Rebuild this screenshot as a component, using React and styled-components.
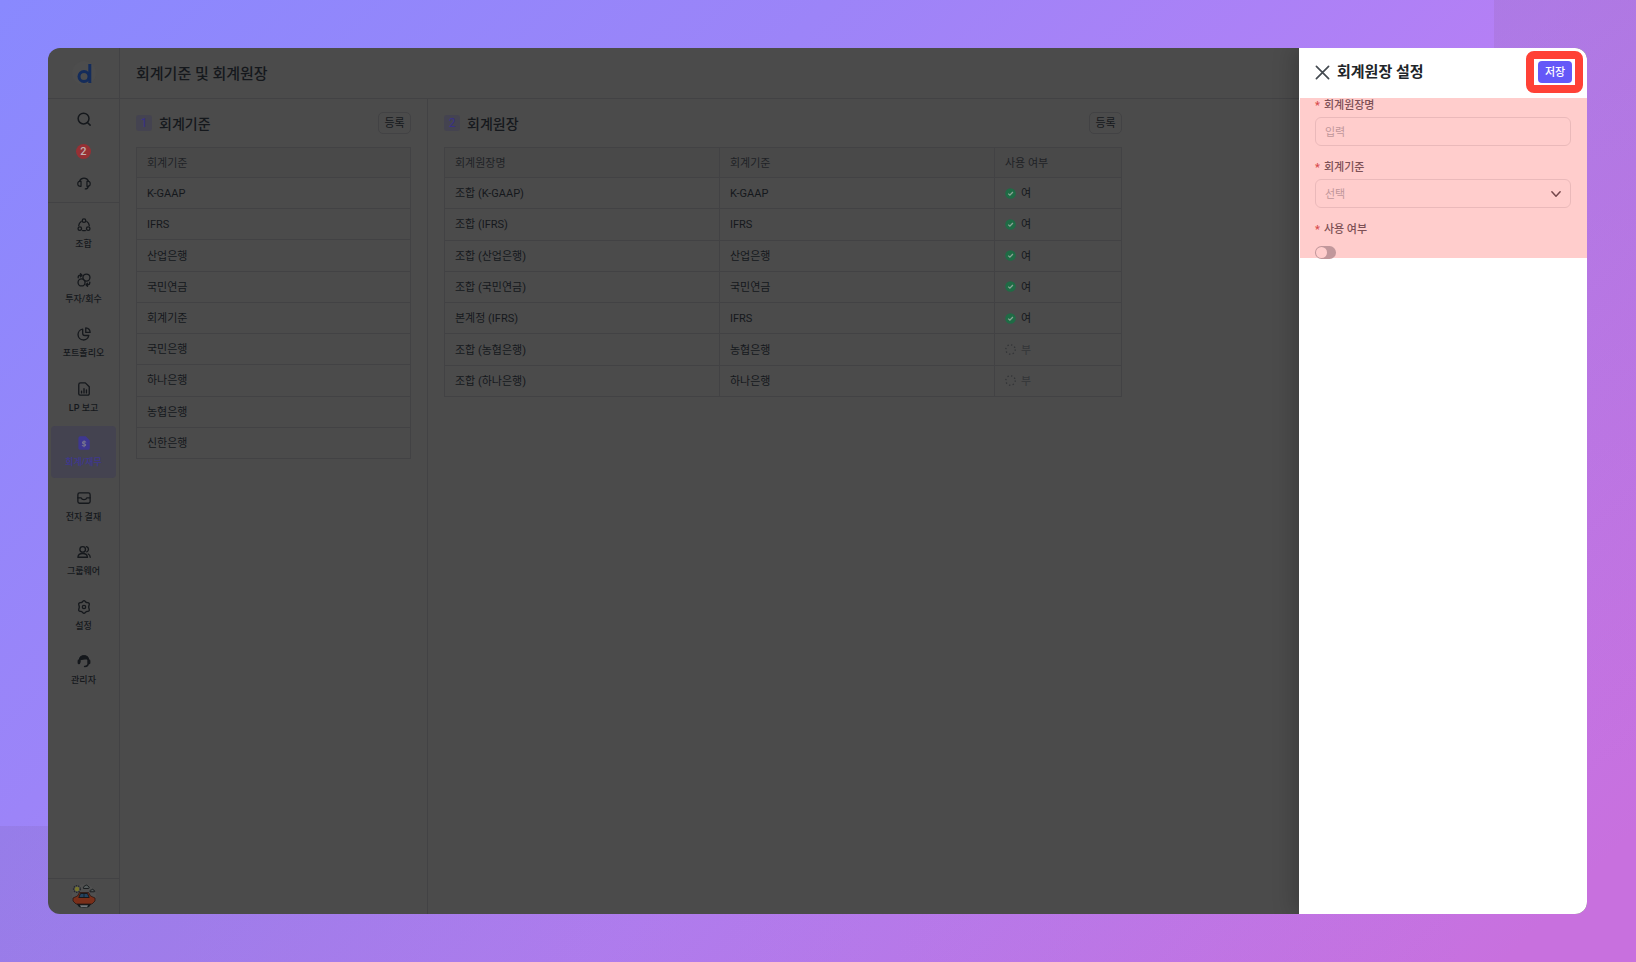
import React, { useState } from "react";
import styled, { createGlobalStyle, css } from "styled-components";

const c = {
  surface: "#4b4b4b",
  head: "#494949",
  line: "#424244",
  ink: "#15181c",
  soft: "#1f2226",
  accent: "#3e3790",
  tint: "#444350",
};

const GlobalStyle = createGlobalStyle`
  *, *::before, *::after { box-sizing: border-box; }
  html, body { margin: 0; height: 100%; }
  #root { height: 100%; }
  body, button, input, select {
    font-family: Roboto, "Noto Sans CJK KR", sans-serif;
  }
  button { cursor: pointer; }
`;

const Backdrop = styled.div`
  position: relative;
  min-height: 100%;
  display: flex;
  padding: 48px 49px 48px 48px;
  background: linear-gradient(135deg, #8989fe 0%, #9c84f8 32%, #b57ff5 60%, #c870de 95%);
`;

const Shade = styled.span`
  position: absolute;
  ${(p) =>
    p.$corner === "top"
      ? css`
          top: 0;
          right: 0;
          width: 142px;
          height: 80%;
          background: linear-gradient(180deg, rgba(150, 100, 170, 0.22), rgba(150, 100, 170, 0));
        `
      : css`
          bottom: 0;
          left: 0;
          width: 90%;
          height: 136px;
          background: linear-gradient(90deg, rgba(130, 100, 180, 0.22), rgba(140, 90, 160, 0));
        `}
`;

const Window = styled.div`
  position: relative;
  flex: 1;
  display: flex;
  overflow: hidden;
  border-radius: 12px;
  background: ${c.surface};
  color: ${c.ink};
`;

const Sidebar = styled.nav`
  width: 72px;
  flex: none;
  display: flex;
  flex-direction: column;
  border-right: 1px solid ${c.line};
`;

const Logo = styled.a`
  height: 51px;
  display: grid;
  place-items: center;
  border-bottom: 1px solid ${c.line};
`;

const Tools = styled.div`
  height: 104px;
  display: flex;
  flex-direction: column;
  align-items: center;
  padding-top: 4px;
  border-bottom: 1px solid ${c.line};
`;

const Tool = styled.button`
  width: 32px;
  height: 32px;
  display: grid;
  place-items: center;
  padding: 0;
  border: 0;
  background: none;
  color: ${c.ink};
`;

const Count = styled.span`
  width: 15px;
  height: 15px;
  border-radius: 50%;
  background: #963034;
  color: #bfb0b0;
  font-size: 11px;
  font-weight: 500;
  line-height: 15px;
  text-align: center;
`;

const Menu = styled.ul`
  height: 498px;
  margin: 0;
  padding: 5px 3px;
  display: grid;
  grid-auto-rows: 1fr;
  gap: 3px;
  list-style: none;
`;

const MenuLink = styled.a`
  height: 100%;
  display: flex;
  flex-direction: column;
  align-items: center;
  padding-top: 10px;
  gap: 5px;
  border-radius: 4px;
  font-size: 9px;
  line-height: 14px;
  font-weight: 500;
  white-space: nowrap;
  text-decoration: none;
  color: ${(p) => (p.$active ? c.accent : c.ink)};
  background: ${(p) => (p.$active ? c.tint : "none")};
`;

const Profile = styled.button`
  height: 36px;
  margin-top: auto;
  display: grid;
  place-items: center;
  padding: 0 0 2px;
  border: 0;
  border-top: 1px solid ${c.line};
  background: none;
`;

const Main = styled.main`
  flex: 1;
  min-width: 0;
  display: flex;
  flex-direction: column;
`;

const TopBar = styled.header`
  height: 51px;
  display: flex;
  align-items: center;
  padding: 2px 16px 0;
  border-bottom: 1px solid ${c.line};
`;

const Title = styled.h1`
  margin: 0;
  font-size: 15px;
  line-height: 24px;
  font-weight: 500;
`;

const Columns = styled.div`
  flex: 1;
  display: flex;
`;

const Section = styled.section`
  width: ${(p) => p.$width}px;
  padding: 13px 16px;
  border-right: ${(p) => (p.$divided ? `1px solid ${c.line}` : "0")};
`;

const SectionHead = styled.div`
  display: flex;
  align-items: center;
  gap: 7px;
  height: 22px;
  margin-bottom: 13px;
`;

const Step = styled.span`
  width: 16px;
  height: 16px;
  border-radius: 3px;
  background: ${c.tint};
  color: #373088;
  font-size: 12px;
  line-height: 16px;
  text-align: center;
`;

const SectionTitle = styled.h2`
  flex: 1;
  margin: 0;
  padding-top: 1px;
  font-size: 14px;
  line-height: 22px;
  font-weight: 500;
`;

const AddButton = styled.button`
  width: 33px;
  height: 22px;
  padding: 2px 0 0;
  border: 1px solid ${c.line};
  border-radius: 5px;
  background: none;
  color: ${c.ink};
  font-size: 11px;
  line-height: 18px;
`;

const Table = styled.table`
  width: 100%;
  height: ${(p) => p.$height}px;
  table-layout: fixed;
  border-collapse: collapse;
  font-size: 11px;
  line-height: 16px;
  text-align: left;

  th, td {
    padding: 2px 10px 0;
    border: 1px solid ${c.line};
    font-weight: 400;
  }
  th { height: 30px; background: ${c.head}; color: ${c.soft}; }
  td { height: 31px; }
`;

const Status = styled.span`
  display: flex;
  align-items: center;
  gap: 5px;
  color: ${(p) => (p.$on ? c.ink : "#333538")};

  svg { margin-bottom: 2px; }
`;

const Drawer = styled.aside`
  position: absolute;
  top: 0;
  right: 0;
  bottom: 0;
  width: 288px;
  background: #fff;
  color: #212529;
  box-shadow: -6px 0 20px rgba(0, 0, 0, 0.18);
`;

const DrawerHead = styled.header`
  height: 50px;
  display: flex;
  align-items: center;
  padding: 0 4px 2px 16px;
`;

const Close = styled.button`
  width: 15px;
  height: 24px;
  display: grid;
  place-items: center;
  padding: 0;
  border: 0;
  background: none;
  color: #444a50;
`;

const DrawerTitle = styled.h2`
  flex: 1;
  margin: 0 0 0 7px;
  font-size: 15px;
  line-height: 24px;
  font-weight: 700;
`;

const Highlight = styled.div`
  display: flex;
  padding: 2px 3px 2px 4px;
  border: 8px solid #ff4136;
  border-radius: 8px;
`;

const Save = styled.button`
  width: 34px;
  height: 22px;
  padding: 2px 0 0;
  border: 0;
  border-radius: 4px;
  background: #6558f8;
  color: #fff;
  font-size: 11px;
  line-height: 20px;
  font-weight: 500;
`;

const Form = styled.form`
  height: 160px;
  margin-left: 1px;
  padding: 1px 16px 0 15px;
  background: #ffcdcc;
`;

const Field = styled.div`
  display: flex;
  flex-direction: column;
  align-items: flex-start;
  gap: ${(p) => (p.$loose ? 9 : 4)}px;
  margin-bottom: 15px;
`;

const Label = styled.label`
  font-size: 11px;
  line-height: 14px;
  font-weight: 500;
  color: #7d5055;

  &::before {
    content: "*";
    margin-right: 4px;
    color: #d84a4c;
  }
`;

const control = css`
  width: 100%;
  height: 29px;
  padding: 2px 9px 0;
  border: 1px solid #eab9ba;
  border-radius: 6px;
  background: transparent;
  font-size: 11px;
  color: #c0969a;
`;

const Input = styled.input`
  ${control}
  &::placeholder { color: #c0969a; opacity: 1; }
`;

const SelectBox = styled.div`
  position: relative;
  width: 100%;
  display: flex;

  svg {
    position: absolute;
    right: 9px;
    top: 9px;
    pointer-events: none;
  }
`;

const Select = styled.select`
  ${control}
  appearance: none;
`;

const Switch = styled.input`
  appearance: none;
  width: 21px;
  height: 13px;
  margin: 0;
  padding: 1px;
  border-radius: 7px;
  background: #c1979b;

  &::before {
    content: "";
    display: block;
    width: 11px;
    height: 11px;
    border-radius: 50%;
    background: #ffcdcc;
  }
  &:checked::before { margin-left: 8px; }
`;

const Icon = ({ children, size = 14, ...rest }) => (
  <svg width={size} height={size} viewBox="0 0 16 16" fill="none" stroke="currentColor" strokeWidth="1.5" strokeLinecap="round" strokeLinejoin="round" aria-hidden="true" {...rest}>
    {children}
  </svg>
);

const icons = {
  fund: (
    <>
      <circle cx="8" cy="3" r="2" /><circle cx="3.2" cy="12.2" r="2" /><circle cx="12.8" cy="12.2" r="2" />
      <path d="M4.800 4A6 6 0 0 0 2 8.600M11.200 4A6 6 0 0 1 14 8.600M6.500 14.300a6 6 0 0 0 3 0" />
    </>
  ),
  invest: (
    <>
      <circle cx="10.8" cy="5.2" r="4" /><circle cx="5.2" cy="10.8" r="4" />
      <path d="M1.4 5.4V4.6a2 2 0 0 1 2-2h2M4 .9l1.7 1.7L4 4.3M14.6 10.6v.8a2 2 0 0 1-2 2h-2M12 11.7l-1.7 1.7 1.7 1.7" />
    </>
  ),
  pie: (
    <>
      <path d="M6.500 2.500a6.200 6.200 0 1 0 7 7.200h-4.500A2.500 2.500 0 0 1 6.500 7.200z" />
      <path d="M10 1A5.500 5.500 0 0 1 15 6.200h-5z" />
    </>
  ),
  report: (
    <>
      <path d="M4 1h5.500L14 5.500V13.500a1.500 1.500 0 0 1-1.500 1.500h-9A1.500 1.500 0 0 1 2 13.500V3a2 2 0 0 1 2-2z" />
      <path d="M5.200 10.500V12.500M8 7.500v5M10.800 9v3.500" />
    </>
  ),
  finance: (
    <>
      <path d="M3.600.4h6.400L14.600 5v9a1.600 1.600 0 0 1-1.600 1.600H3.200A1.600 1.600 0 0 1 1.600 14V2.400a2 2 0 0 1 2-2z" fill="currentColor" stroke="none" />
      <path d="M10 7C9.600 6.200 6.200 6 6.200 7.700c0 1.500 3.800.8 3.800 2.400 0 1.700-3.600 1.500-4 .6M8.100 5.500v6.800" stroke="#77758f" strokeWidth="1.200" />
    </>
  ),
  approval: (
    <>
      <rect x="1" y="2.200" width="14" height="11.800" rx="2" />
      <path d="M1 7.800h3.800c.4 1.300 1.500 2 3.200 2s2.800-.7 3.200-2H15" />
    </>
  ),
  group: (
    <>
      <circle cx="6.500" cy="5" r="3.200" />
      <path d="M1 14c.3-3 2.300-4.300 5.500-4.300S11.700 11 12 14zM10.800 1.900a3.200 3.200 0 0 1 .4 6M12.800 10.300c1.500.6 2.200 1.900 2.300 3.700" />
    </>
  ),
  settings: (
    <>
      <path d="M8 .8c1.200 0 1.500 1.400 2.600 1.900 1 .5 2.600 0 3.300 1.100.7 1.200-.5 2.400-.5 4.200s1.200 3 .5 4.200c-.7 1.100-2.300.6-3.300 1.100-1.100.5-1.400 1.900-2.600 1.900s-1.500-1.400-2.600-1.900c-1-.5-2.600 0-3.300-1.100C1.400 11 2.600 9.800 2.600 8S1.400 5 2.100 3.800c.7-1.100 2.300-.6 3.300-1.100C6.500 2.200 6.800.8 8 .8z" />
      <circle cx="8" cy="8" r="1.900" />
    </>
  ),
  admin: (
    <>
      <path d="M3.200 9V7a4.800 4.800 0 0 1 9.600 0v3.500c0 2.200-1.600 3.700-4.100 3.700" strokeWidth="1.800" />
      <path d="M2.800 6.500a5.300 5.300 0 0 1 10.400 0L11 5.200 5 6z" fill="currentColor" />
      <path d="M2.200 7.800v2.500M13.800 7.800v2.500" strokeWidth="3" />
    </>
  ),
};

const Car = () => (
  <svg width="24" height="24" viewBox="0 0 24 24" aria-hidden="true">
    <circle cx="12" cy="12" r="12" fill="#505050" />
    <circle cx="5" cy="5" r="3.400" fill="none" stroke="#24272c" strokeWidth="1.400" strokeDasharray="1.400 1" />
    <circle cx="5" cy="5" r="2.200" fill="#77752d" />
    <path d="M11.500 4.500c-.5-2 1-2.500 1.500-2.500.5-1.500 2.800-1 3 .3 1.500.2 1.500 2.200.5 2.200zM18 7.800c-.3-1.600.8-2 1.400-1.900.8-1.200 2.300-.6 2.400.5 1.200.1 1 1.400.4 1.400z" fill="#555c5c" stroke="#191c1e" />
    <path d="M3.500 18.500h17L17 23q-5 2-10 0z" fill="#151b1e" />
    <path d="M1 14l4.500-2 2-3.500h9l2 3.500L23 14v3l-3 3H4l-3-3z" fill="#7a2f19" stroke="#2a1814" strokeWidth=".8" />
    <path d="M6.800 13.500l1.700-4h7l1.700 4z" fill="#24435f" stroke="#18191c" />
    <path d="M12 9.500v4" stroke="#18191c" strokeWidth=".8" />
    <path d="M8 21.200h8l-1 2H9z" fill="#73777a" />
  </svg>
);

const Chevron = () => (
  <Icon size={12} color="#74464a" strokeWidth="2"><path d="M2.500 5l5.500 6 5.500-6" /></Icon>
);

const OnMark = () => (
  <svg width="11" height="11" viewBox="0 0 11 11" aria-hidden="true">
    <circle cx="5.500" cy="5.500" r="5.300" fill="#1f6b45" />
    <path d="M3.200 5.600l1.700 1.600 3-3.200" fill="none" stroke="#8aa396" strokeWidth="1.300" />
  </svg>
);

const OffMark = () => (
  <svg width="11" height="11" viewBox="0 0 11 11" aria-hidden="true">
    <circle cx="5.500" cy="5.500" r="4.700" fill="none" stroke="#303235" strokeWidth="1.200" strokeDasharray="1.300 2.391" />
  </svg>
);

const menu = [
  ["fund", "조합"],
  ["invest", "투자/회수"],
  ["pie", "포트폴리오"],
  ["report", "LP 보고"],
  ["finance", "회계/재무"],
  ["approval", "전자 결재"],
  ["group", "그룹웨어"],
  ["settings", "설정"],
  ["admin", "관리자"],
];

const standards = ["K-GAAP", "IFRS", "산업은행", "국민연금", "회계기준", "국민은행", "하나은행", "농협은행", "신한은행"];

const ledgers = [
  ["조합 (K-GAAP)", "K-GAAP", true],
  ["조합 (IFRS)", "IFRS", true],
  ["조합 (산업은행)", "산업은행", true],
  ["조합 (국민연금)", "국민연금", true],
  ["본계정 (IFRS)", "IFRS", true],
  ["조합 (농협은행)", "농협은행", false],
  ["조합 (하나은행)", "하나은행", false],
];

export default function App() {
  const [used, setUsed] = useState(false);

  return (
    <Backdrop>
      <GlobalStyle />
      <Shade $corner="top" />
      <Shade $corner="bottom" />
      <Window>
        <Sidebar>
          <Logo href="#" aria-label="홈">
            <svg width="24" height="24" viewBox="0 0 24 24" fill="none" aria-hidden="true">
              <circle cx="12" cy="12" r="12" fill="#4d4d4d" />
              <circle cx="12" cy="15.500" r="5" stroke="#142c5b" strokeWidth="3" />
              <path d="M17.800 3v19" stroke="#142c5b" strokeWidth="3" />
            </svg>
          </Logo>
          <Tools>
            <Tool aria-label="검색">
              <Icon strokeWidth="1.700"><circle cx="7.500" cy="7.500" r="6.200" /><path d="M12.200 12.200L15 15" /></Icon>
            </Tool>
            <Tool><Count>2</Count></Tool>
            <Tool aria-label="고객 지원">
              <Icon strokeWidth="1.400">
                <path d="M3 5.700a5.400 5.400 0 0 1 10 0M13 11.700c-.5 1.900-1.700 3.100-3.500 3.100" />
                <path d="M4.600 6v5.800C2 12 .9 10.800.9 8.900S2 5.800 4.600 6zM11.400 6v5.800c2.600.2 3.700-1 3.700-2.900S14 5.800 11.400 6z" />
              </Icon>
            </Tool>
          </Tools>
          <Menu>
            {menu.map(([icon, label]) => (
              <li key={label}>
                <MenuLink href="#" $active={icon === "finance"}>
                  <Icon>{icons[icon]}</Icon>
                  {label}
                </MenuLink>
              </li>
            ))}
          </Menu>
          <Profile aria-label="내 프로필"><Car /></Profile>
        </Sidebar>

        <Main>
          <TopBar><Title>회계기준 및 회계원장</Title></TopBar>
          <Columns>
            <Section $width={308} $divided>
              <SectionHead>
                <Step>1</Step>
                <SectionTitle>회계기준</SectionTitle>
                <AddButton>등록</AddButton>
              </SectionHead>
              <Table $height={312}>
                <thead><tr><th>회계기준</th></tr></thead>
                <tbody>
                  {standards.map((name) => <tr key={name}><td>{name}</td></tr>)}
                </tbody>
              </Table>
            </Section>
            <Section $width={710}>
              <SectionHead>
                <Step>2</Step>
                <SectionTitle>회계원장</SectionTitle>
                <AddButton>등록</AddButton>
              </SectionHead>
              <Table $height={250}>
                <colgroup><col width="275" /><col width="275" /><col /></colgroup>
                <thead><tr><th>회계원장명</th><th>회계기준</th><th>사용 여부</th></tr></thead>
                <tbody>
                  {ledgers.map(([name, standard, on]) => (
                    <tr key={name}>
                      <td>{name}</td>
                      <td>{standard}</td>
                      <td><Status $on={on}>{on ? <OnMark /> : <OffMark />}{on ? "여" : "부"}</Status></td>
                    </tr>
                  ))}
                </tbody>
              </Table>
            </Section>
          </Columns>
        </Main>

        <Drawer>
          <DrawerHead>
            <Close aria-label="닫기">
              <Icon size={15} strokeWidth="1.800"><path d="M1.500 1.500l13 13M14.500 1.500l-13 13" /></Icon>
            </Close>
            <DrawerTitle>회계원장 설정</DrawerTitle>
            <Highlight><Save type="submit" form="ledger-form">저장</Save></Highlight>
          </DrawerHead>
          <Form id="ledger-form" onSubmit={(e) => e.preventDefault()}>
            <Field>
              <Label htmlFor="ledger-name">회계원장명</Label>
              <Input id="ledger-name" placeholder="입력" />
            </Field>
            <Field>
              <Label htmlFor="ledger-standard">회계기준</Label>
              <SelectBox>
                <Select id="ledger-standard" defaultValue="">
                  <option value="">선택</option>
                  {standards.map((name) => <option key={name}>{name}</option>)}
                </Select>
                <Chevron />
              </SelectBox>
            </Field>
            <Field $loose>
              <Label htmlFor="ledger-used">사용 여부</Label>
              <Switch id="ledger-used" type="checkbox" role="switch" checked={used} onChange={(e) => setUsed(e.target.checked)} />
            </Field>
          </Form>
        </Drawer>
      </Window>
    </Backdrop>
  );
}
